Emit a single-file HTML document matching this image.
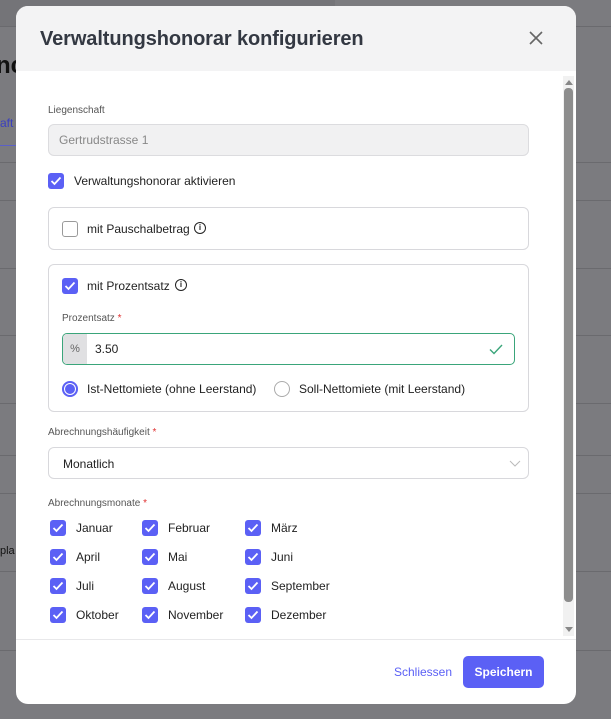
<!DOCTYPE html>
<html><head><meta charset="utf-8"><style>
*{box-sizing:border-box;margin:0;padding:0}
body{width:611px;height:719px;background:#7b7b7f;font-family:"Liberation Sans",sans-serif;position:relative;overflow:hidden;color:#222}
.bgl{position:absolute;left:0;right:0;height:1px;background:#6a6a6e}
.modal{position:absolute;left:16px;top:6px;width:560px;height:698px;background:#fff;border-radius:12px;overflow:hidden}
.hdr{height:65px;background:#f3f3f4;position:relative}
.hdr h1{position:absolute;left:24px;top:22px;font-size:20px;font-weight:bold;color:#333842;letter-spacing:-0.1px}
.close{position:absolute;left:512px;top:24px}
.lbl{position:absolute;font-size:10px;color:#555}
.star{color:#e03030}
.cb{position:absolute;width:16px;height:16px;border-radius:3px;background:#5b60f5}
.cb svg{position:absolute;left:2px;top:3px}
.cbe{position:absolute;width:16px;height:16px;border-radius:3px;border:1px solid #9a9a9a;background:#fff}
.t{position:absolute;font-size:12px;color:#222}
.box{position:absolute;border:1px solid #d8d8dc;border-radius:6px}
.info{position:absolute;width:12px;height:12px;border:1.3px solid #222;border-radius:50%;font-size:8px;text-align:center;line-height:10px;font-weight:bold}
.foot{position:absolute;left:0;right:0;top:633px;border-top:1px solid #e8e8ea}
</style></head><body>
<div style="position:absolute;left:0;top:0;width:335px;height:26px;background:#747478"></div>
<div class="bgl" style="top:26px"></div>
<div class="bgl" style="top:145px;background:#5b60c8;width:16px"></div>
<div class="bgl" style="top:162px"></div>
<div class="bgl" style="top:200px"></div>
<div class="bgl" style="top:268px"></div>
<div class="bgl" style="top:335px"></div>
<div class="bgl" style="top:403px"></div>
<div class="bgl" style="top:455px"></div>
<div class="bgl" style="top:493px"></div>
<div class="bgl" style="top:571px"></div>
<div class="bgl" style="top:650px"></div>
<div style="position:absolute;left:-4px;top:52px;font-size:24px;font-weight:bold;color:#111">nc</div>
<div style="position:absolute;left:0;top:116px;font-size:12px;color:#3a3fc0">aft</div>
<div style="position:absolute;left:0;top:545px;font-size:11px;color:#111">pla</div>
<div class="modal">
 <div class="hdr"><h1>Verwaltungshonorar konfigurieren</h1>
  <svg class="close" width="16" height="16" viewBox="0 0 16 16"><path d="M2 2L14 14M14 2L2 14" stroke="#666" stroke-width="1.6"/></svg></div>
 <div style="position:absolute;left:547px;top:70px;width:11px;height:560px;background:#f1f1f1"></div>
 <div style="position:absolute;left:548px;top:82px;width:9px;height:514px;background:#8d8d8d;border-radius:4px"></div>
 <div style="position:absolute;left:549px;top:70px;width:0;height:0;border:4px solid transparent;border-bottom:5px solid #888"></div>
 <div style="position:absolute;left:549px;top:621px;width:0;height:0;border:4px solid transparent;border-top:5px solid #888"></div>

 <div class="lbl" style="left:32px;top:99px">Liegenschaft</div>
 <div class="box" style="left:32px;top:118px;width:481px;height:32px;background:#f1f1f2;border-color:#dcdcdf"><span style="position:absolute;left:10px;top:8px;font-size:12px;color:#888">Gertrudstrasse 1</span></div>
 <div class="cb" style="left:32px;top:167px"><svg width="12" height="10" viewBox="0 0 12 10"><path d="M1.5 5L4.5 8L10.5 1.5" stroke="#fff" stroke-width="1.8" fill="none"/></svg></div>
 <div class="t" style="left:58px;top:168px">Verwaltungshonorar aktivieren</div>

 <div class="box" style="left:32px;top:201px;width:481px;height:43px"></div>
 <div class="cbe" style="left:46px;top:215px"></div>
 <div class="t" style="left:71px;top:216px">mit Pauschalbetrag</div>
 <div class="info" style="left:178px;top:216px">i</div>

 <div class="box" style="left:32px;top:258px;width:481px;height:148px"></div>
 <div class="cb" style="left:46px;top:272px"><svg width="12" height="10" viewBox="0 0 12 10"><path d="M1.5 5L4.5 8L10.5 1.5" stroke="#fff" stroke-width="1.8" fill="none"/></svg></div>
 <div class="t" style="left:71px;top:273px">mit Prozentsatz</div>
 <div class="info" style="left:159px;top:273px">i</div>
 <div class="lbl" style="left:46px;top:307px">Prozentsatz <span class="star">*</span></div>
 <div style="position:absolute;left:46px;top:327px;width:453px;height:32px;border:1px solid #3aa57a;border-radius:5px;overflow:hidden">
  <div style="position:absolute;left:0;top:0;width:24px;height:100%;background:#e0e0e2;font-size:11px;color:#666;text-align:center;line-height:30px">%</div>
  <span style="position:absolute;left:32px;top:8px;font-size:12px">3.50</span>
  <svg style="position:absolute;left:426px;top:10px" width="14" height="11" viewBox="0 0 14 11"><path d="M1 5.5L5 9.5L13 1" stroke="#3aa57a" stroke-width="1.4" fill="none"/></svg>
 </div>
 <div style="position:absolute;left:46px;top:375px;width:16px;height:16px;border-radius:50%;background:#5b60f5;box-shadow:inset 0 0 0 2px #5b60f5,inset 0 0 0 3px #fff"></div>
 <div class="t" style="left:71px;top:376px">Ist-Nettomiete (ohne Leerstand)</div>
 <div style="position:absolute;left:258px;top:375px;width:16px;height:16px;border-radius:50%;border:1px solid #aaa"></div>
 <div class="t" style="left:283px;top:376px">Soll-Nettomiete (mit Leerstand)</div>

 <div class="lbl" style="left:32px;top:421px">Abrechnungshäufigkeit <span class="star">*</span></div>
 <div class="box" style="left:32px;top:441px;width:481px;height:32px"><span style="position:absolute;left:14px;top:9px;font-size:12px">Monatlich</span>
  <svg style="position:absolute;left:460px;top:12px" width="12" height="8" viewBox="0 0 12 8"><path d="M1 1L6 6L11 1" stroke="#bbb" stroke-width="1" fill="none"/></svg></div>

 <div class="lbl" style="left:32px;top:492px">Abrechnungsmonate <span class="star">*</span></div>
 <div id="m"></div>
 <div class="foot"></div>
 <div style="position:absolute;left:378px;top:659px;font-size:12px;color:#5b60f5">Schliessen</div>
 <div style="position:absolute;left:447px;top:650px;width:81px;height:32px;border-radius:5px;background:#5b60f5;color:#fff;font-size:12px;font-weight:bold;text-align:center;line-height:32px">Speichern</div>
</div>
<script>
var n=[["Januar","Februar","März"],["April","Mai","Juni"],["Juli","August","September"],["Oktober","November","Dezember"]],x=[34,126,229],h="";
for(var r=0;r<4;r++)for(var c=0;c<3;c++){var y=514+r*29;h+='<div class="cb" style="left:'+x[c]+'px;top:'+y+'px"><svg width="12" height="10" viewBox="0 0 12 10"><path d="M1.5 5L4.5 8L10.5 1.5" stroke="#fff" stroke-width="1.8" fill="none"/></svg></div><div class="t" style="left:'+(x[c]+26)+'px;top:'+(y+1)+'px">'+n[r][c]+'</div>';}
document.getElementById("m").outerHTML=h;
</script>
</body></html>
